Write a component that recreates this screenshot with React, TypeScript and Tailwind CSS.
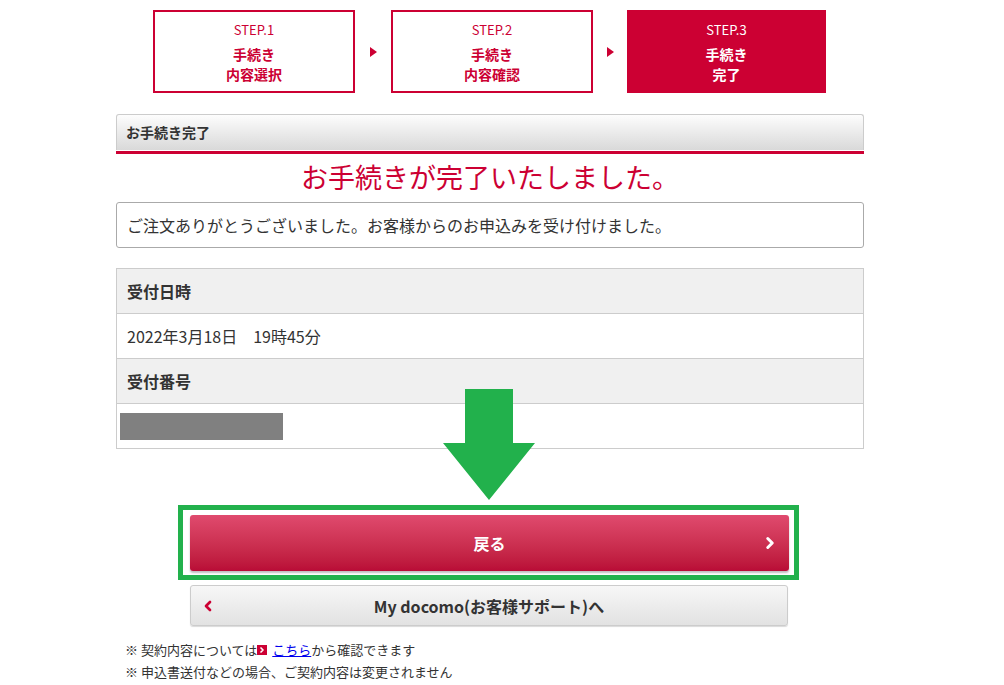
import { ChevronLeft, ChevronRight } from "lucide-react";

const font = { fontFamily: '"Noto Sans CJK JP", "Noto Sans", sans-serif' };

const steps = [
  { no: "STEP.1", lines: ["手続き", "内容選択"], active: false },
  { no: "STEP.2", lines: ["手続き", "内容確認"], active: false },
  { no: "STEP.3", lines: ["手続き", "完了"], active: true },
];

const StepBox = ({ no, lines, active }: { no: string; lines: string[]; active: boolean }) => (
  <div
    className={
      "h-[83px] border-2 border-[#cc0033] flex flex-col items-center pt-[9px] " +
      (active ? "w-[199px] bg-[#cc0033] text-white" : "w-[202px] bg-white text-[#cc0033]")
    }
  >
    <div className="text-[13px] leading-[18px]">{no}</div>
    <div className="mt-[5px] text-[14px] font-bold leading-[20px] text-center">
      {lines.map((l) => (
        <div key={l}>{l}</div>
      ))}
    </div>
  </div>
);

const Arrow = ({ wide }: { wide?: boolean }) => (
  <div className={(wide ? "w-[36px]" : "w-[34px]") + " flex items-center justify-center"}>
    <div className="w-0 h-0 border-y-[5px] border-y-transparent border-l-[7px] border-l-[#cc0033]" />
  </div>
);

export default function App() {
  return (
    <div className="w-[1004px] h-[685px] bg-white overflow-hidden text-[#333]" style={font}>
      <div className="ml-[116px] w-[748px] relative pt-[10px]">
        {/* steps */}
        <div className="flex pl-[37px]">
          <StepBox {...steps[0]} />
          <Arrow wide />
          <StepBox {...steps[1]} />
          <Arrow />
          <StepBox {...steps[2]} />
        </div>

        {/* section header */}
        <div className="mt-[21px]">
          <div className="h-[36px] border border-[#ccc] border-b-0 rounded-t-[3px] bg-gradient-to-b from-[#fdfdfd] to-[#d9d9d9] flex items-center px-[9px] text-[14px] font-bold text-[#333]">
            お手続き完了
          </div>
          <div className="h-px bg-white" />
          <div className="h-[3px] bg-[#cc0033]" />
        </div>

        <h1 className="mt-[4px] text-center text-[27px] leading-[38px] text-[#cc0033]">
          お手続きが完了いたしました。
        </h1>

        <div className="mt-[6px] h-[46px] border border-[#aaa] rounded-[3px] flex items-center px-[10px] text-[16px] text-[#333]">
          ご注文ありがとうございました。お客様からのお申込みを受け付けました。
        </div>

        {/* table */}
        <div className="mt-[20px] border border-[#ccc] border-b-0 text-[16px]">
          <div className="h-[45px] bg-[#f0f0f0] border-b border-[#ccc] flex items-center px-[10px] font-bold">
            受付日時
          </div>
          <div className="h-[45px] bg-white border-b border-[#ccc] flex items-center px-[10px]">
            2022年3月18日　19時45分
          </div>
          <div className="h-[45px] bg-[#f0f0f0] border-b border-[#ccc] flex items-center px-[10px] font-bold">
            受付番号
          </div>
          <div className="h-[45px] bg-white border-b border-[#ccc] flex items-center px-[3px]">
            <div className="w-[163px] h-[27px] bg-[#808080]" />
          </div>
        </div>

        {/* buttons */}
        <div className="mt-[56px] ml-[62px] w-[621px] h-[75px] border-[5px] border-[#22b14c] pt-[5px] pl-[7px]">
          <button className="w-[599px] h-[56px] rounded-[3px] bg-gradient-to-b from-[#e04a6e] to-[#b90b36] shadow-[0_2px_2px_rgba(0,0,0,0.25)] relative flex items-center justify-center text-white text-[16px] font-bold">
            戻る
            <ChevronRight className="absolute right-[10px] top-1/2 -translate-y-1/2 w-[18px] h-[18px]" strokeWidth={4} />
          </button>
        </div>

        <div className="mt-[5px] ml-[74px] w-[598px] h-[41px] rounded-[3px] border border-[#ccc] bg-gradient-to-b from-[#f7f7f7] to-[#e2e2e2] shadow-[0_1px_1px_rgba(0,0,0,0.15)] relative flex items-center justify-center text-[16px] font-bold text-[#333]">
          <ChevronLeft className="absolute left-[9px] top-1/2 -translate-y-1/2 w-[16px] h-[16px] text-[#cc0033]" strokeWidth={4} />
          My docomo(お客様サポート)へ
        </div>

        {/* notes */}
        <div className="mt-[13px] ml-[9px] text-[13px] leading-[22px] text-[#333]">
          <div className="flex items-center">
            <span>※ 契約内容については</span>
            <span className="inline-flex items-center justify-center w-[10px] h-[10px] bg-[#cc0033] text-white">
              <ChevronRight className="w-[8px] h-[8px]" strokeWidth={5} />
            </span>
            <a className="ml-[5px] text-[#0000ee] underline">こちら</a>
            <span>から確認できます</span>
          </div>
          <div>※ 申込書送付などの場合、ご契約内容は変更されません</div>
        </div>

        {/* green arrow overlay */}
        <svg
          className="absolute left-[327px] top-[389px]"
          width="93"
          height="112"
          viewBox="0 0 93 112"
        >
          <path d="M22 0 H70 V54 H92 L46 111 L0 54 H22 Z" fill="#22b14c" />
        </svg>
      </div>
    </div>
  );
}
